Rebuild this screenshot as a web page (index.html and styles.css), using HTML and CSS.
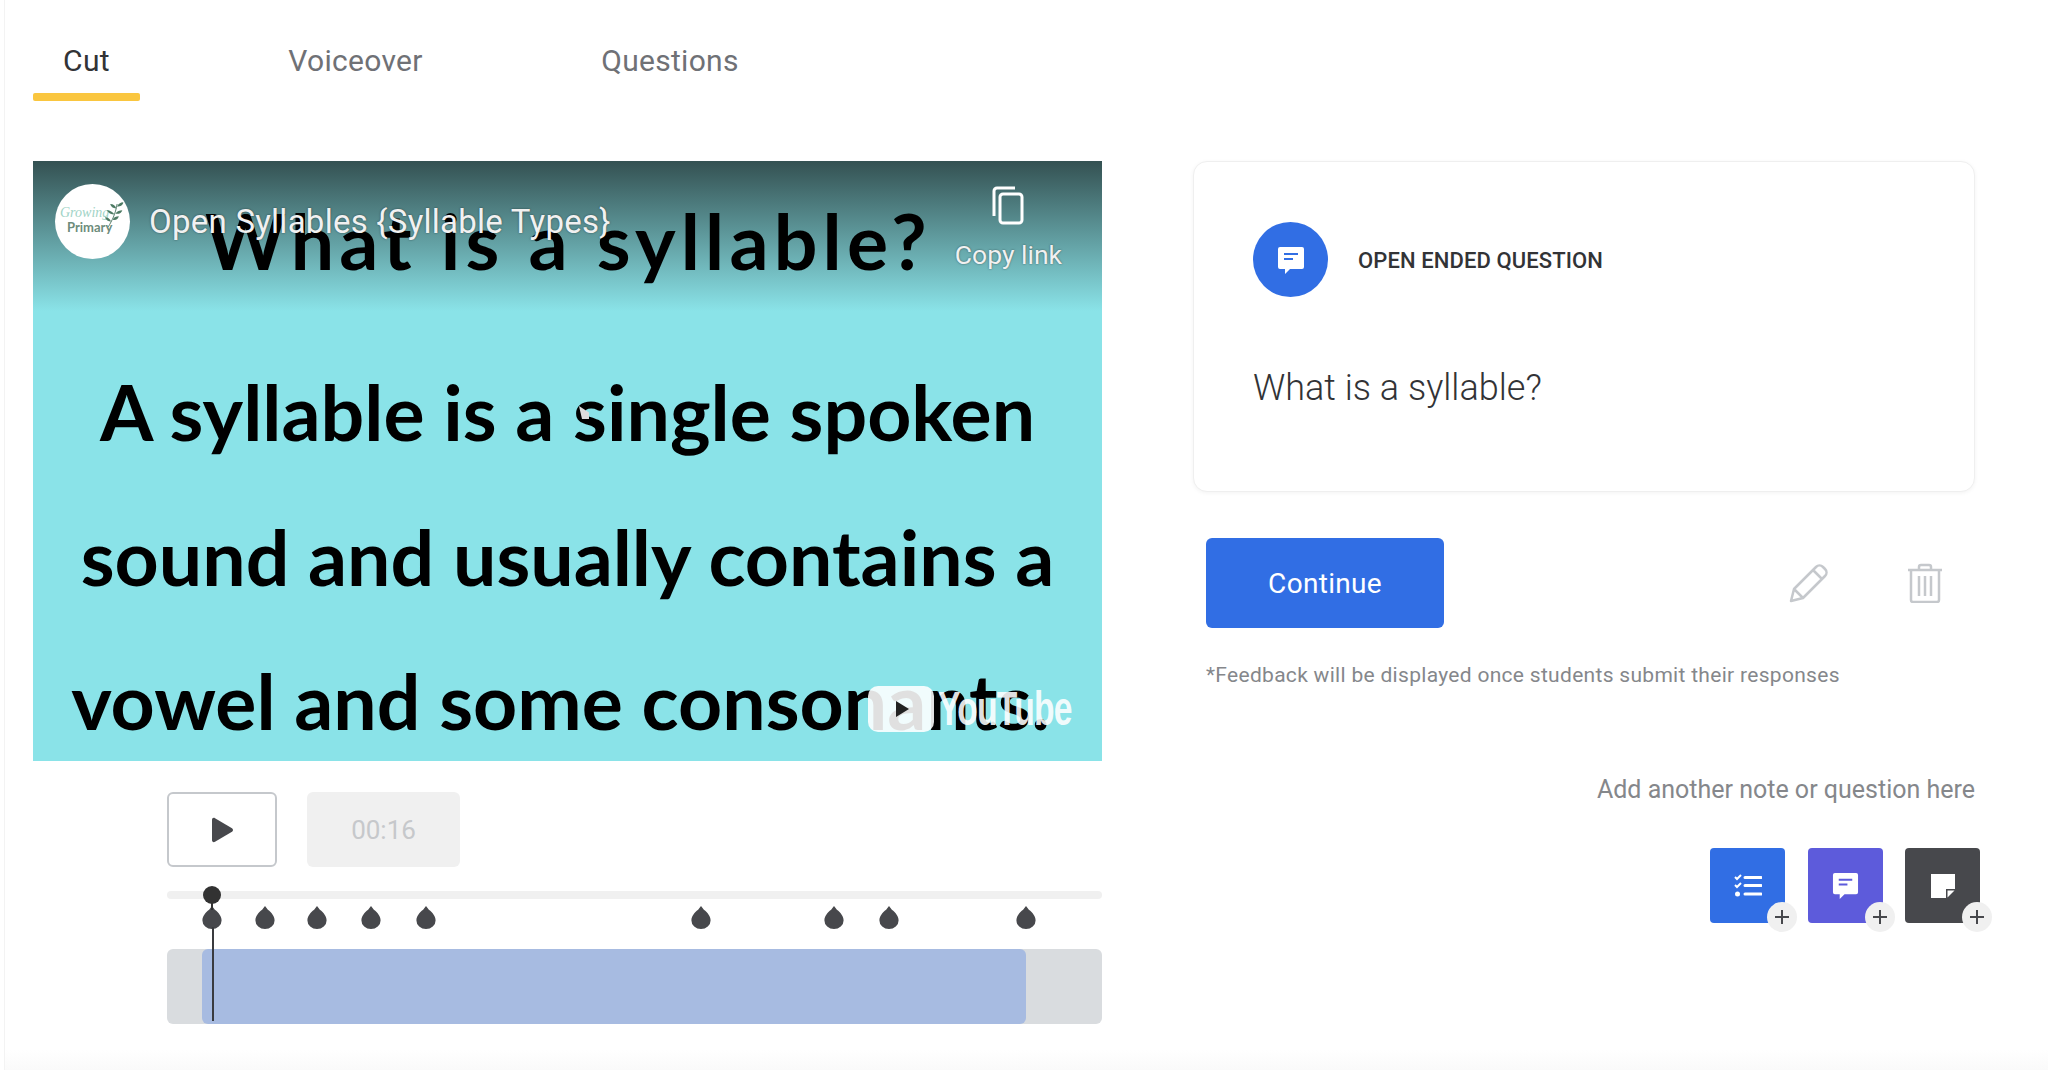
FILE: index.html
```html
<!DOCTYPE html>
<html>
<head>
	<title>Cut</title>
	<link rel="stylesheet" href="styles.css">
</head>
<body>
	<div class="page">

		<ul class="tabs">
			<li class="tab active">Cut<i></i></li>
			<li class="tab">Voiceover<i></i></li>
			<li class="tab">Questions<i></i></li>
		</ul>

		<div class="columns">
			<div class="left">
				<div class="video">
					<p class="slide-line line1">What is a syllable?</p>
					<p class="slide-line line2">A syllable is a single spoken</p>
					<p class="slide-line line3">sound and usually contains a</p>
					<p class="slide-line line4">vowel and some consonants.</p>

					<i class="cursor"></i>

					<div class="channel">
						<div class="channel-logo">
							<span class="growing">Growing</span>
							<span class="primary">Primary</span>
							<svg class="leaf" viewBox="0 0 24 30">
								<path d="M5 29C9 22 13 15 15 3" fill="none" stroke="#3f6b57" stroke-width="1"/>
								<path d="M14 8C10 8 8 6 7 3c4 0 6 2 7 5zM15 6c1-3 4-5 7-5 0 3-3 5-7 5zM12 15C8 15 5 13 3 10c4 0 7 2 9 5zM13 14c2-3 5-4 8-4-1 3-4 5-8 4zM8 23c-3 0-6-2-7-5 4 0 6 2 7 5zM10 21c1-3 4-4 7-4-1 3-3 5-7 4z" fill="#4d7a63"/>
							</svg>
						</div>
						<span class="channel-title">Open Syllables {Syllable Types}</span>
					</div>

					<div class="copy-link">
						<svg viewBox="0 0 36 40" width="36" height="40">
							<path d="M4 30V5a3 3 0 0 1 3-3h18" fill="none" stroke="#fff" stroke-width="3"/>
							<rect x="10" y="8" width="22" height="29" rx="3" fill="none" stroke="#fff" stroke-width="3"/>
						</svg>
						<span>Copy link</span>
					</div>

					<div class="yt">
						<svg class="yt-btn" viewBox="0 0 66 46" width="66" height="46">
							<rect width="66" height="46" rx="10" fill="#fff" fill-opacity=".88"/>
							<path d="M28 15l13 8-13 8z" fill="#222"/>
						</svg>
						<span class="yt-word">YouTube</span>
					</div>
				</div>

				<div class="editor">
					<div class="controls">
						<button class="play">
							<svg viewBox="0 0 24 26" width="24" height="26"><path d="M2 3c0-2 1.500-2.600 3-1.800l17 10c1.300.8 1.300 2.800 0 3.600l-17 10c-1.500.8-3 .2-3-1.800z" fill="#47484c"/></svg>
						</button>
						<div class="time">00:16</div>
					</div>

					<div class="timeline">
						<div class="track"></div>
						<div class="pins">
							<svg class="drop" style="left: 45px" viewBox="0 0 20 24"><path d="M10 0l3 4c4 3 7 7 7 11a10 9 0 0 1-20 0c0-4 3-8 7-11z"/></svg>
							<svg class="drop" style="left: 98px" viewBox="0 0 20 24"><path d="M10 0l3 4c4 3 7 7 7 11a10 9 0 0 1-20 0c0-4 3-8 7-11z"/></svg>
							<svg class="drop" style="left: 150px" viewBox="0 0 20 24"><path d="M10 0l3 4c4 3 7 7 7 11a10 9 0 0 1-20 0c0-4 3-8 7-11z"/></svg>
							<svg class="drop" style="left: 204px" viewBox="0 0 20 24"><path d="M10 0l3 4c4 3 7 7 7 11a10 9 0 0 1-20 0c0-4 3-8 7-11z"/></svg>
							<svg class="drop" style="left: 259px" viewBox="0 0 20 24"><path d="M10 0l3 4c4 3 7 7 7 11a10 9 0 0 1-20 0c0-4 3-8 7-11z"/></svg>
							<svg class="drop" style="left: 534px" viewBox="0 0 20 24"><path d="M10 0l3 4c4 3 7 7 7 11a10 9 0 0 1-20 0c0-4 3-8 7-11z"/></svg>
							<svg class="drop" style="left: 667px" viewBox="0 0 20 24"><path d="M10 0l3 4c4 3 7 7 7 11a10 9 0 0 1-20 0c0-4 3-8 7-11z"/></svg>
							<svg class="drop" style="left: 722px" viewBox="0 0 20 24"><path d="M10 0l3 4c4 3 7 7 7 11a10 9 0 0 1-20 0c0-4 3-8 7-11z"/></svg>
							<svg class="drop" style="left: 859px" viewBox="0 0 20 24"><path d="M10 0l3 4c4 3 7 7 7 11a10 9 0 0 1-20 0c0-4 3-8 7-11z"/></svg>
						</div>
						<div class="strip">
							<div class="range"></div>
						</div>
						<i class="handle"></i>
						<i class="playhead"></i>
					</div>
				</div>
			</div>

			<div class="right">
				<div class="card">
					<div class="card-head">
						<span class="round-icon">
							<svg viewBox="0 0 28 28" width="28" height="28">
								<path d="M3 1h22a2 2 0 0 1 2 2v18a2 2 0 0 1-2 2H13l-5 5v-5H3a2 2 0 0 1-2-2V3a2 2 0 0 1 2-2z" fill="#fff"/>
								<path d="M7 8h14M7 13h9" stroke="#316ee4" stroke-width="2" fill="none"/>
							</svg>
						</span>
						<span class="card-title">OPEN ENDED QUESTION</span>
					</div>
					<p class="question">What is a syllable?</p>
				</div>

				<div class="actions">
					<button class="continue">Continue</button>
					<svg class="pencil" viewBox="0 0 40 40" width="40" height="40">
						<path d="M2 38l3-12L27 4c2-2 5-2 7 0l2 2c2 2 2 5 0 7L14 35zM5 26l9 9M24 7l9 9M9 22l11-11" fill="none" stroke="#c5c8cc" stroke-width="2.500" stroke-linejoin="round"/>
					</svg>
					<svg class="trash" viewBox="0 0 36 40" width="36" height="40">
						<path d="M1 7h34M12 7V4a2 2 0 0 1 2-2h8a2 2 0 0 1 2 2v3M4 7v30a2 2 0 0 0 2 2h24a2 2 0 0 0 2-2V7M12 13v20M18 13v20M24 13v20" fill="none" stroke="#c5c8cc" stroke-width="2.500"/>
					</svg>
				</div>
				<p class="note">*Feedback will be displayed once students submit their responses</p>

				<p class="add-label">Add another note or question here</p>
				<div class="add-row">
					<div class="add-btn blue">
						<svg viewBox="0 0 28 24" width="28" height="24">
							<path d="M1 3l2 2 4-4M1 11l2 2 4-4" fill="none" stroke="#fff" stroke-width="2"/>
							<circle cx="3.500" cy="20" r="2.500" fill="#fff"/>
							<path d="M11 3.500h16M11 11.500h16M11 20h16" stroke="#fff" stroke-width="3" stroke-linecap="round"/>
						</svg>
						<i class="plus"></i>
					</div>
					<div class="add-btn purple">
						<svg viewBox="0 0 28 28" width="27" height="27">
							<path d="M3 1h22a2 2 0 0 1 2 2v18a2 2 0 0 1-2 2H13l-5 5v-5H3a2 2 0 0 1-2-2V3a2 2 0 0 1 2-2z" fill="#fff"/>
							<path d="M7 8h14M7 13h9" stroke="#5d5bdb" stroke-width="2" fill="none"/>
						</svg>
						<i class="plus"></i>
					</div>
					<div class="add-btn dark">
						<svg viewBox="0 0 24 24" width="24" height="24">
							<path d="M0 0h24v15h-9v9H0z" fill="#fff"/>
							<path d="M16.500 16.500h7l-7 7z" fill="#fff"/>
						</svg>
						<i class="plus"></i>
					</div>
				</div>
			</div>
		</div>

	</div>
</body>
</html>
```

FILE: styles.css
```css
*{
	box-sizing: border-box;
}
html, body{
	margin: 0;
	height: 100%;
	background-color: #fff;
}
body{
	font-family: "Roboto", "Liberation Sans", sans-serif;
	overflow: hidden;
}
p{
	margin: 0;
}
.page{
	height: 1070px;
	margin-left: 4px;
	padding-left: 28px;
	border-left: 1px solid #f3f3f3;
	background: linear-gradient(to bottom, #fff 1050px, #fafafa 1070px);
}

/* tabs */
.tabs{
	display: flex;
	gap: 119px;
	margin: 0;
	padding: 0;
	list-style: none;
	height: 161px;
}
.tab{
	width: 107px;
	padding-top: 43px;
	font-size: 30px;
	line-height: 36px;
	letter-spacing: .3px;
	color: #6f7176;
	text-align: center;
	white-space: nowrap;
}
.tab:nth-child(2){
	width: 193px;
}
.tab:nth-child(3){
	width: 198px;
}
.tab i{
	display: block;
	height: 8px;
	margin-top: 14px;
	border-radius: 2px;
}
.tab.active{
	color: #323336;
}
.tab.active i{
	background-color: #fac63f;
}

.columns{
	display: flex;
	gap: 91px;
}
.left{
	width: 1069px;
}
.right{
	width: 782px;
}

/* video frame */
.video{
	position: relative;
	height: 600px;
	padding-top: 29px;
	background: linear-gradient(to bottom, #345152, #8ae3e8 150px);
	overflow: hidden;
	text-align: center;
	font-family: "Lato", sans-serif;
	font-weight: 700;
	font-size: 77px;
	line-height: 100px;
	color: #000;
}
.slide-line{
	white-space: nowrap;
}
.line1{
	letter-spacing: 5.200px;
	padding-left: 2px;
}
.line2{
	margin-top: 71px;
}
.line3{
	margin-top: 45px;
}
.line4{
	margin-top: 44px;
	padding-right: 14px;
}
.cursor{
	position: absolute;
	left: 546px;
	top: 245px;
	width: 10px;
	height: 13px;
	background-color: #dcdcdc;
	clip-path: polygon(0 0, 100% 50%, 100% 100%, 30% 100%);
}
.channel{
	position: absolute;
	left: 22px;
	top: 22px;
	display: flex;
	align-items: center;
	gap: 19px;
	font-family: "Roboto", sans-serif;
	font-weight: 400;
	font-size: 33px;
	line-height: 77px;
	letter-spacing: .25px;
	color: #f1f1f1;
	text-shadow: 0 0 2px rgba(0, 0, 0, .5);
}
.channel-logo{
	position: relative;
	width: 75px;
	height: 75px;
	border-radius: 50%;
	background-color: #fff;
	text-shadow: none;
	letter-spacing: 0;
}
.growing{
	position: absolute;
	left: 5px;
	top: 20px;
	font-family: "Liberation Serif", serif;
	font-style: italic;
	font-size: 14px;
	line-height: 18px;
	color: #9fd3c6;
}
.primary{
	position: absolute;
	left: 12px;
	top: 35px;
	font-family: "Lato", sans-serif;
	font-size: 13px;
	line-height: 16px;
	font-weight: 700;
	color: #6d8c7b;
}
.leaf{
	position: absolute;
	left: 49px;
	top: 16px;
	width: 21px;
	height: 29px;
}
.copy-link{
	position: absolute;
	right: 40px;
	top: 25px;
	display: flex;
	flex-direction: column;
	align-items: center;
	gap: 13px;
	font-family: "Roboto", sans-serif;
	font-weight: 400;
	font-size: 26.500px;
	line-height: 32px;
	color: #f1f1f1;
	text-shadow: 0 0 2px rgba(0, 0, 0, .5);
}
.yt{
	position: absolute;
	left: 835px;
	top: 525px;
	display: flex;
	align-items: center;
}
.yt-btn{
	display: block;
}
.yt-word{
	display: block;
	width: 68px;
	margin-left: 4px;
	transform: scaleX(.7);
	transform-origin: left center;
	font-family: "Liberation Sans", sans-serif;
	font-weight: 700;
	font-size: 48px;
	line-height: 46px;
	letter-spacing: -1px;
	color: rgba(255, 255, 255, .9);
}

/* play controls and timeline */
.editor{
	padding-left: 134px;
}
.controls{
	display: flex;
	gap: 30px;
	padding-top: 31px;
}
.play{
	display: flex;
	align-items: center;
	justify-content: center;
	width: 110px;
	height: 75px;
	padding: 0;
	border: 2px solid #c5c8cc;
	border-radius: 6px;
	background-color: #fff;
}
.time{
	width: 153px;
	height: 75px;
	border-radius: 6px;
	background-color: #f0f0f0;
	color: #c6c8cb;
	font-size: 26px;
	line-height: 77px;
	text-align: center;
}
.timeline{
	position: relative;
	padding-top: 24px;
}
.track{
	height: 8px;
	border-radius: 4px;
	background-color: #f0f0f0;
}
.pins{
	position: relative;
	height: 50px;
}
.drop{
	position: absolute;
	top: 7px;
	width: 20px;
	height: 23px;
	margin-left: -10px;
	fill: #47484c;
}
.strip{
	height: 75px;
	border-radius: 6px;
	background-color: #d9dcdf;
}
.range{
	height: 75px;
	margin-left: 35px;
	width: 824px;
	border-radius: 6px;
	background-color: #a7bbe1;
}
.handle{
	position: absolute;
	left: 36px;
	top: 19px;
	width: 18px;
	height: 18px;
	border-radius: 50%;
	background-color: #323232;
}
.handle::after{
	content: "";
	position: absolute;
	left: 8px;
	top: 16px;
	width: 2px;
	height: 8px;
	background-color: #323232;
}
.playhead{
	position: absolute;
	left: 45px;
	top: 60px;
	width: 2px;
	height: 94px;
	background-color: #3a3b3f;
}

/* question card */
.card{
	height: 331px;
	padding: 60px 59px 0;
	border: 1px solid #efefef;
	border-radius: 14px;
	box-shadow: 0 1px 4px rgba(0, 0, 0, .05);
	background-color: #fff;
}
.card-head{
	display: flex;
	align-items: center;
	gap: 30px;
}
.round-icon{
	display: flex;
	align-items: center;
	justify-content: center;
	width: 75px;
	height: 75px;
	border-radius: 50%;
	background-color: #316ee4;
}
.card-title{
	padding-top: 2px;
	font-size: 22px;
	font-weight: 500;
	letter-spacing: .1px;
	color: #323336;
}
.question{
	margin-top: 69px;
	font-size: 36px;
	line-height: 44px;
	font-weight: 300;
	color: #323336;
}
.actions{
	display: flex;
	align-items: center;
	margin-top: 46px;
	padding-left: 13px;
}
.continue{
	width: 238px;
	height: 90px;
	padding-top: 2px;
	border: 0;
	border-radius: 6px;
	background-color: #316ee4;
	color: #fff;
	font-family: inherit;
	font-size: 28px;
	letter-spacing: .3px;
}
.pencil{
	margin-left: 345px;
}
.trash{
	margin-left: 78px;
}
.note{
	margin-top: 34px;
	padding-left: 13px;
	font-size: 21px;
	line-height: 26px;
	letter-spacing: .3px;
	color: #85878b;
}
.add-label{
	margin-top: 87px;
	font-size: 25px;
	line-height: 30px;
	color: #85878b;
	text-align: right;
}
.add-row{
	display: flex;
	justify-content: flex-end;
	gap: 22.500px;
	margin-top: 43px;
	margin-right: -5px;
}
.add-btn{
	position: relative;
	display: flex;
	align-items: center;
	justify-content: center;
	width: 75px;
	height: 75px;
	border-radius: 4px;
}
.blue{
	background-color: #316ee4;
}
.purple{
	background-color: #5d5bdb;
}
.dark{
	background-color: #47484c;
}
.plus{
	position: absolute;
	right: -12px;
	bottom: -9px;
	width: 30px;
	height: 30px;
	border-radius: 50%;
	background: linear-gradient(#47484c, #47484c) center / 14px 2px no-repeat,
		linear-gradient(#47484c, #47484c) center / 2px 14px no-repeat,
		#f0f0f0;
}
```
